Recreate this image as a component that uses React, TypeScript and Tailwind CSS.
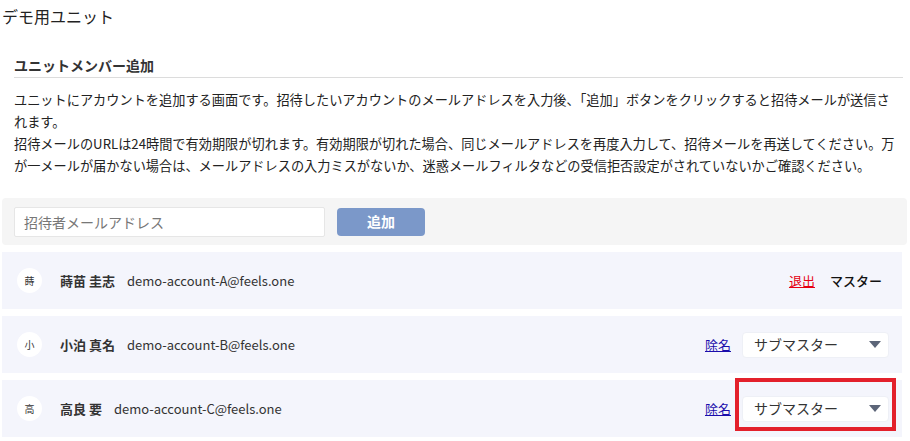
const members = [
  { initial: '蒔', name: '蒔苗 圭志', email: 'demo-account-A@feels.one', role: 'master' },
  { initial: '小', name: '小泊 真名', email: 'demo-account-B@feels.one', role: 'sub' },
  { initial: '高', name: '高良 要', email: 'demo-account-C@feels.one', role: 'sub' },
];

function RoleSelect() {
  return (
    <div className="w-[147px] h-[26px] bg-white rounded-[4px] border border-[#eef0f6] flex items-center justify-between pl-[11px] pr-[7px]">
      <span className="text-[14px] text-[#333]">サブマスター</span>
      <svg width="12" height="8" viewBox="0 0 12 8">
        <path d="M0 0 H12 L6 7 Z" fill="#5c6578" />
      </svg>
    </div>
  );
}

export default function App() {
  return (
    <div
      className="w-[910px] h-[441px] bg-white text-[#333] overflow-hidden"
      style={{ fontFamily: '"Noto Sans CJK JP", "Noto Sans", sans-serif' }}
    >
      <div className="pl-[2px] pt-[6px] text-[16px] leading-[20px] text-[#222]">デモ用ユニット</div>

      <div className="px-[14px] mt-[29px]">
        <h2 className="text-[14px] leading-[20px] font-bold pb-[2px] border-b border-[#dcdcdc] w-[889px]">
          ユニットメンバー追加
        </h2>
        <p className="mt-[11px] text-[13.2px] leading-[22px] w-[885px] text-[#222]">
          ユニットにアカウントを追加する画面です。招待したいアカウントのメールアドレスを入力後、「追加」ボタンをクリックすると招待メールが送信されます。
          <br />
          招待メールのURLは24時間で有効期限が切れます。有効期限が切れた場合、同じメールアドレスを再度入力して、招待メールを再送してください。万が一メールが届かない場合は、メールアドレスの入力ミスがないか、迷惑メールフィルタなどの受信拒否設定がされていないかご確認ください。
        </p>
      </div>

      <div className="ml-[2px] mt-[21px] w-[905px] h-[47px] bg-[#f5f5f5] rounded-[4px] flex items-center pl-[12px] gap-[12px]">
        <input
          type="text"
          placeholder="招待者メールアドレス"
          className="w-[311px] h-[30px] bg-white border border-[#e6e6e6] rounded-[2px] px-[9px] text-[14px] placeholder:text-[#777] outline-none"
        />
        <button className="w-[88px] h-[28px] bg-[#7b98c9] rounded-[4px] text-white text-[14px] font-bold">追加</button>
      </div>

      <div className="ml-[2px] mt-[7px] w-[900px] space-y-[7px]">
        {members.map((m, i) => (
          <div key={m.email} className="relative h-[57px] bg-[#f4f5fc] flex items-center pl-[15px] pr-[13px]">
            <div className="w-[25px] h-[25px] rounded-full bg-white flex items-center justify-center text-[10px]">
              {m.initial}
            </div>
            <span className="ml-[18px] text-[13px] font-bold">{m.name}</span>
            <span className="ml-[12px] text-[13px]">{m.email}</span>
            <div className="ml-auto flex items-center">
              {m.role === 'master' ? (
                <>
                  <a className="text-[13px] text-[#e60012] underline">退出</a>
                  <span className="ml-[15px] mr-[7px] text-[13px] font-medium text-[#111]">マスター</span>
                </>
              ) : (
                <>
                  <a className="text-[13px] text-[#1a0dab] underline">除名</a>
                  <div className="ml-[11px]">
                    <RoleSelect />
                  </div>
                </>
              )}
            </div>
            {i === 2 && (
              <div className="absolute left-[733px] top-[-2px] w-[161px] h-[53px] border-[4px] border-[#e3202b]" />
            )}
          </div>
        ))}
      </div>
    </div>
  );
}
